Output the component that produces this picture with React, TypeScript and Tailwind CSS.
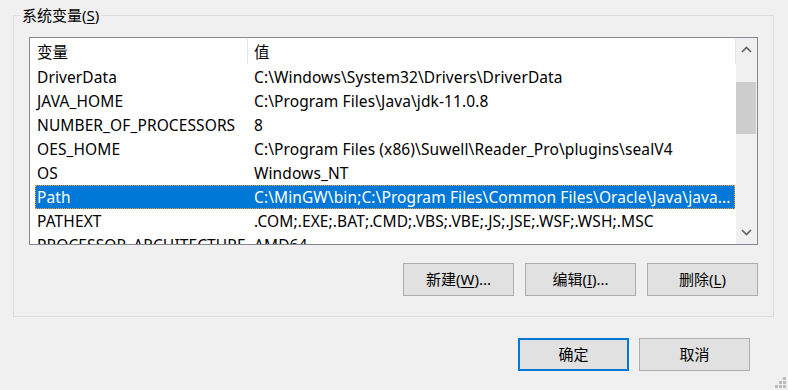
import React from 'react';

type Row = { name: string; value: string };

const rows: Row[] = [
  { name: 'DriverData', value: 'C:\\Windows\\System32\\Drivers\\DriverData' },
  { name: 'JAVA_HOME', value: 'C:\\Program Files\\Java\\jdk-11.0.8' },
  { name: 'NUMBER_OF_PROCESSORS', value: '8' },
  { name: 'OES_HOME', value: 'C:\\Program Files (x86)\\Suwell\\Reader_Pro\\plugins\\sealV4' },
  { name: 'OS', value: 'Windows_NT' },
  { name: 'Path', value: 'C:\\MinGW\\bin;C:\\Program Files\\Common Files\\Oracle\\Java\\java...' },
  { name: 'PATHEXT', value: '.COM;.EXE;.BAT;.CMD;.VBS;.VBE;.JS;.JSE;.WSF;.WSH;.MSC' },
  { name: 'PROCESSOR_ARCHITECTURE', value: 'AMD64' },
];

const Button = ({ children, primary }: { children: React.ReactNode; primary?: boolean }) => (
  <button
    className={`w-[111px] h-[33px] bg-[#e1e1e1] flex items-center justify-center text-black ${
      primary ? 'border-2 border-[#0078d7]' : 'border border-[#adadad]'
    }`}
  >
    {children}
  </button>
);

const App: React.FC = () => {
  return (
    <div
      className="relative w-[788px] h-[390px] overflow-hidden bg-[#f0f0f0] pt-[15px] pl-[13px] text-[15px] text-black"
      style={{ fontFamily: '"Noto Sans", "Noto Sans CJK SC", sans-serif' }}
    >
      {/* group box */}
      <div className="relative w-[761px] h-[302px] border border-[#dcdcdc] pt-[21px] pl-[15px]">
        <span className="absolute left-[6px] top-[-11px] bg-[#f0f0f0] px-[2px] leading-[20px]">
          系统变量(<span className="underline underline-offset-2">S</span>)
        </span>

        <div className="flex w-[729px] h-[208px] border border-[#828790] bg-white">
          <div className="flex-1 flex flex-col overflow-hidden text-[15.5px] tracking-[0.1px]">
            <div className="flex h-[27px] shrink-0 items-center">
              <div className="w-[217px] h-full pl-[7px] pt-[2px] flex items-center">变量</div>
              <div className="w-px h-[26px] self-end mb-[1px] bg-[#e5e5e5]" />
              <div className="flex-1 h-full pl-[6px] pt-[2px] flex items-center">值</div>
              <div className="w-px h-[26px] self-end mb-[1px] bg-[#e5e5e5]" />
            </div>
            {rows.map((r) => {
              const sel = r.name === 'Path';
              return (
                <div key={r.name} className="h-[24px] shrink-0 flex">
                  <div
                    className={`ml-[5px] w-[700px] h-full pt-[2px] flex items-center whitespace-nowrap border border-dotted ${
                      sel ? 'bg-[#0078d7] text-white border-[#f7a13a]' : 'border-transparent'
                    }`}
                  >
                    <div className="w-[211px] pl-[1px] overflow-hidden">{r.name}</div>
                    <div className="flex-1 pl-[7px] overflow-hidden">{r.value}</div>
                  </div>
                </div>
              );
            })}
          </div>

          {/* scrollbar */}
          <div className="w-[21px] shrink-0 bg-[#f0f0f0] flex flex-col">
            <div className="h-[22px] flex items-center justify-center">
              <svg width="11" height="7" viewBox="0 0 11 7">
                <path d="M1 6 L5.5 1.5 L10 6" fill="none" stroke="#606060" strokeWidth="1.6" />
              </svg>
            </div>
            <div className="h-[22px]" />
            <div className="h-[52px] w-[20px] bg-[#cdcdcd]" />
            <div className="flex-1" />
            <div className="h-[24px] flex items-center justify-center">
              <svg width="11" height="7" viewBox="0 0 11 7">
                <path d="M1 1 L5.5 5.5 L10 1" fill="none" stroke="#606060" strokeWidth="1.6" />
              </svg>
            </div>
          </div>
        </div>

        <div className="mt-[18px] w-[729px] flex justify-end gap-[11px]">
          <Button>
            新建(<span className="underline underline-offset-2">W</span>)...
          </Button>
          <Button>
            编辑(<span className="underline underline-offset-2">I</span>)...
          </Button>
          <Button>
            删除(<span className="underline underline-offset-2">L</span>)
          </Button>
        </div>
      </div>

      <div className="mt-[21px] w-[775px] pr-[38px] flex justify-end gap-[10px]">
        <Button primary>确定</Button>
        <Button>取消</Button>
      </div>

      {/* resize grip */}
      <svg className="absolute right-[2px] bottom-[2px]" width="11" height="11" viewBox="0 0 11 11">
        <rect x="8" y="0" width="3" height="3" fill="#bcbcbc" />
        <rect x="4" y="4" width="3" height="3" fill="#bcbcbc" />
        <rect x="8" y="4" width="3" height="3" fill="#bcbcbc" />
        <rect x="0" y="8" width="3" height="3" fill="#bcbcbc" />
        <rect x="4" y="8" width="3" height="3" fill="#bcbcbc" />
        <rect x="8" y="8" width="3" height="3" fill="#bcbcbc" />
      </svg>
    </div>
  );
};

export default App;
